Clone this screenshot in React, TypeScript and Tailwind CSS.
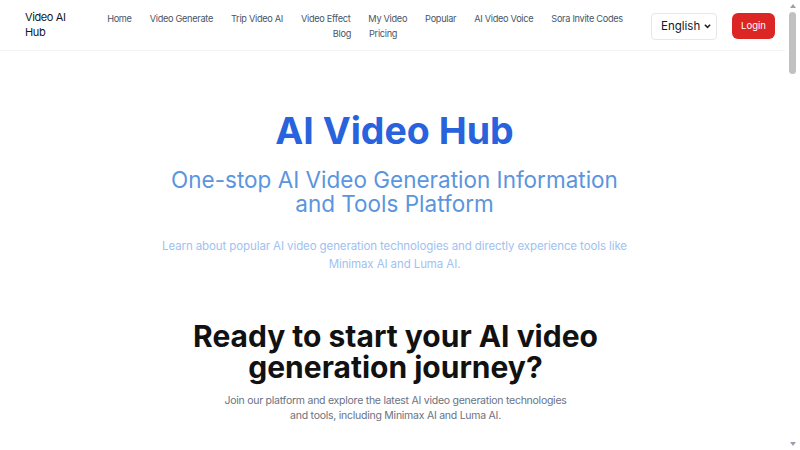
const navItems = [
  "Home",
  "Video Generate",
  "Trip Video AI",
  "Video Effect",
  "My Video",
  "Popular",
  "AI Video Voice",
  "Sora Invite Codes",
  "Blog",
  "Pricing",
];

function Header() {
  return (
    <header className="flex h-[51px] items-start border-b border-gray-100 bg-white pl-[25px] pr-[10px]">
      <div className="w-[58px] pt-[10px] text-[11px] leading-[15px] tracking-[-0.4px] text-gray-900">
        Video AI Hub
      </div>
      <nav className="ml-[17px] flex w-[530px] flex-wrap justify-center gap-x-[18px] pt-[11px] text-[9.2px] leading-[15px] tracking-[-0.3px] text-gray-600">
        {navItems.map((item) => (
          <a key={item} href="#" className="hover:text-gray-900">
            {item}
          </a>
        ))}
      </nav>
      <div className="ml-auto flex items-center gap-[15px] pt-[12px]">
        <div className="relative">
          <select className="h-[27px] w-[66px] appearance-none rounded border border-gray-200 bg-white pl-[9px] text-[11.5px] text-gray-900">
            <option>English</option>
          </select>
          <svg
            className="pointer-events-none absolute right-[6px] top-[11px] h-[6px] w-[7px]"
            viewBox="0 0 8 6"
            fill="none"
            stroke="#222"
            strokeWidth="1.8"
          >
            <path d="M1 1.5l3 3 3-3" />
          </svg>
        </div>
        <button className="h-[26px] w-[43px] rounded-md bg-[#dc2626] text-[9.5px] text-white">
          Login
        </button>
      </div>
    </header>
  );
}

function Scrollbar() {
  return (
    <div className="fixed right-0 top-0 flex h-full w-[15px] flex-col items-center bg-white">
      <div className="mt-[4px] h-0 w-0 border-x-[3px] border-b-[4px] border-x-transparent border-b-gray-400" />
      <div className="mt-[4px] h-[62px] w-[7px] rounded-full bg-[#c1c1c1]" />
      <div className="mt-auto mb-[4px] h-0 w-0 border-x-[3px] border-t-[4px] border-x-transparent border-t-gray-400" />
    </div>
  );
}

export default function App() {
  return (
    <div className="min-h-[3100px] bg-white pr-[15px] font-['Inter',sans-serif]">
      <Header />
      <main className="flex flex-col items-center text-center">
        <section className="flex flex-col items-center pl-[4px] pt-[58px]">
          <h1 className="text-[37.5px] font-bold leading-[44px] text-[#2862dc]">AI Video Hub</h1>
          <h2 className="mt-[15px] w-[470px] text-[22.5px] leading-[24px] text-[#5b95de]">
            One-stop AI Video Generation Information and Tools Platform
          </h2>
          <p className="mt-[21px] w-[475px] text-[11.5px] leading-[18px] tracking-[-0.1px] text-[#9fc2f0]">
            Learn about popular AI video generation technologies and directly experience tools like Minimax AI and Luma AI.
          </p>
        </section>
        <section className="flex flex-col items-center pl-[6px] pt-[48px]">
          <h2 className="w-[420px] text-[30px] font-bold leading-[31px] text-[#111]">
            Ready to start your AI video generation journey?
          </h2>
          <p className="mt-[10px] w-[346px] text-[10.5px] leading-[15px] tracking-[-0.25px] text-gray-500">
            Join our platform and explore the latest AI video generation technologies and tools, including Minimax AI and Luma AI.
          </p>
        </section>
      </main>
      <Scrollbar />
    </div>
  );
}
